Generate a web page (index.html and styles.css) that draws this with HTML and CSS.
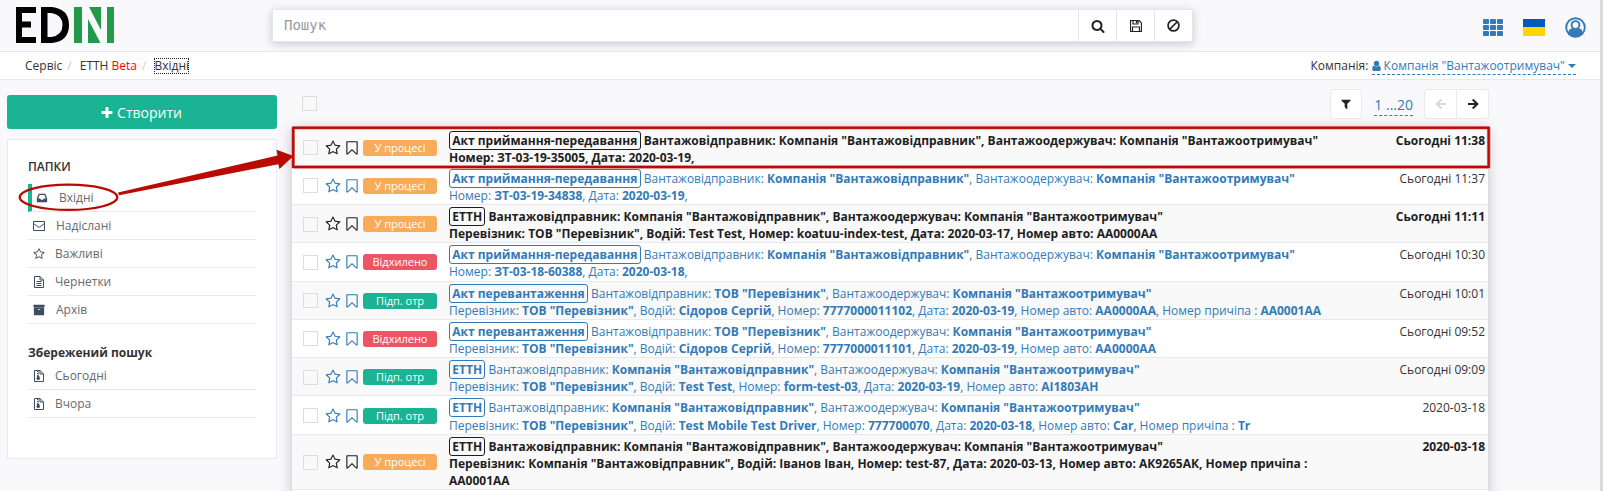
FILE: index.html
```html
<!DOCTYPE html>
<html lang="uk">
<head>
<meta charset="utf-8">
<title>EDIN</title>
<link rel="stylesheet" href="styles.css">
</head>
<body>
<svg class="defs" width="0" height="0">
  <symbol id="search" viewBox="0 0 1792 1792"><path d="M1216 832q0-185-131.500-316.500t-316.500-131.500-316.500 131.500-131.500 316.500 131.500 316.500 316.500 131.500 316.500-131.500 131.500-316.500zm512 832q0 52-38 90t-90 38q-54 0-90-38l-343-342q-179 124-399 124-143 0-273.500-55.500t-225-150-150-225-55.500-273.500 55.500-273.500 150-225 225-150 273.500-55.500 273.500 55.500 225 150 150 225 55.500 273.500q0 220-124 399l343 343q37 37 37 90z"/></symbol>
  <symbol id="plus" viewBox="0 0 1792 1792"><path d="M1600 736v192q0 40-28 68t-68 28h-416v416q0 40-28 68t-68 28h-192q-40 0-68-28t-28-68v-416h-416q-40 0-68-28t-28-68v-192q0-40 28-68t68-28h416v-416q0-40 28-68t68-28h192q40 0 68 28t28 68v416h416q40 0 68 28t28 68z"/></symbol>
  <symbol id="star" viewBox="0 0 1792 1792"><path d="M1201 1004l306-297-422-62-189-382-189 382-422 62 306 297-73 421 378-199 377 199zm527-357q0 22-26 48l-363 354 86 500q1 7 1 20 0 50-41 50-19 0-40-12l-449-236-449 236q-22 12-40 12-21 0-31.500-14.500t-10.500-35.500q0-6 2-20l86-500-364-354q-25-27-25-48 0-37 56-46l502-73 225-455q19-41 49-41t49 41l225 455 502 73q56 9 56 46z"/></symbol>
  <symbol id="bookmark" viewBox="0 0 1792 1792"><path d="M1408 256h-1024v1242l423-406 89-85 89 85 423 406v-1242zm12-128q23 0 44 9 33 13 52.500 41t19.500 62v1289q0 34-19.500 62t-52.500 41q-19 8-44 8-48 0-83-32l-441-424-441 424q-36 33-83 33-23 0-44-9-33-13-52.500-41t-19.500-62v-1289q0-34 19.500-62t52.500-41q21-9 44-9h1048z"/></symbol>
  <symbol id="filter" viewBox="0 0 1792 1792"><path d="M1595 295q17 41-14 70l-493 493v742q0 42-39 59-13 5-25 5-27 0-45-19l-256-256q-19-19-19-45v-486l-493-493q-31-29-14-70 17-39 59-39h1280q42 0 59 39z"/></symbol>
  <symbol id="inbox" viewBox="0 0 1792 1792"><path d="M1151 960h316q-1-3-2.500-8t-2.500-8l-212-496h-708l-212 496q-1 2-2.500 8t-2.500 8h316l95 192h320zm513 30v482q0 26-19 45t-45 19h-1408q-26 0-45-19t-19-45v-482q0-62 25-123l238-552q10-25 36.500-42t52.500-17h832q26 0 52.500 17t36.500 42l238 552q25 61 25 123z"/></symbol>
  <symbol id="archive" viewBox="0 0 1792 1792"><path d="M1088 832q0-26-19-45t-45-19h-256q-26 0-45 19t-19 45 19 45 45 19h256q26 0 45-19t19-45zm576-192v960q0 26-19 45t-45 19h-1408q-26 0-45-19t-19-45v-960q0-26 19-45t45-19h1408q26 0 45 19t19 45zm64-448v256q0 26-19 45t-45 19h-1536q-26 0-45-19t-19-45v-256q0-26 19-45t45-19h1536q26 0 45 19t19 45z"/></symbol>
  <symbol id="mail" viewBox="0 0 12 12"><path d="M.5 1.500h11v9h-11zM.5 3.500l4.700 3.400q.8.500 1.600 0l4.700-3.400" fill="none" stroke="currentColor"/></symbol>
  <symbol id="file" viewBox="0 0 12 12"><path d="M1.500.5h5.500l3.500 3.500v7.500h-9zM7 .5v3.500h3.500M3.500 5.500h5M3.500 7.500h5M3.500 9.500h5" fill="none" stroke="currentColor"/></symbol>
  <symbol id="zip" viewBox="0 0 12 12"><path d="M1.500.5h5.500l3.500 3.500v7.500h-9zM7 .5v3.500h3.500" fill="none" stroke="currentColor"/><path d="M4.500 1v5M5.500 1.500v5" fill="none" stroke="currentColor" stroke-dasharray="1 1"/><path d="M4.200 6h2l.7 2.500q0 1.500-1.700 1.500t-1.700-1.500z"/></symbol>
  <symbol id="save" viewBox="0 0 12 12"><path d="M.5.5h8.500l2.500 2.500v8.500h-11zM3 .5v3.500h5v-3.500M2.500 11.500v-4.500h7v4.500" fill="none" stroke="currentColor" stroke-width="1.200"/><path d="M5.800 1h1.400v2.200h-1.400z"/></symbol>
  <symbol id="ban" viewBox="0 0 12 12"><path d="M2.300 9.700l7.400-7.400M11 6a5 5 0 1 1-10 0a5 5 0 1 1 10 0z" fill="none" stroke="currentColor" stroke-width="1.600"/></symbol>
  <symbol id="arrow" viewBox="0 0 12 12"><path d="M1 6h9M5.700 1.400l4.600 4.600-4.600 4.600" fill="none" stroke="currentColor" stroke-width="2.100"/></symbol>
  <symbol id="person" viewBox="0 0 10 12"><circle cx="5" cy="3.200" r="2.900"/><path d="M2 5.400q3 2.500 6 0q1.800.8 1.800 4q0 2.100-1.700 2.100h-6.200q-1.700 0-1.700-2.100q0-3.200 1.800-4z"/></symbol>
</svg>

<header class="topbar">
  <svg class="logo" width="98" height="36" viewBox="0 0 98 36">
    <path d="M0 0h20v6h-14v8.500h9v6h-9v9.500h14v6h-20z"/>
    <path fill-rule="evenodd" d="M25 0h11q17 2 17 18t-17 18h-11zM31.500 6v24h4q11-2 11-12t-11-12z"/>
    <path class="logo-green" d="M58 0h8v36h-8zM91 0h7v36h-7zM73 0h12v23zM72 12l12.500 24h-12.500z"/>
  </svg>
  <div class="search">
    <div class="search-input">Пошук</div>
    <div class="search-btn"><svg width="14" height="14"><use href="#search"/></svg></div>
    <div class="search-btn"><svg width="12" height="12"><use href="#save"/></svg></div>
    <div class="search-btn"><svg width="13" height="13"><use href="#ban"/></svg></div>
  </div>
  <div class="top-icons">
    <svg width="20" height="17" viewBox="0 0 20 17"><g id="cells"><rect width="6" height="5" rx="1"/><rect x="7" width="6" height="5" rx="1"/><rect x="14" width="6" height="5" rx="1"/></g><use href="#cells" y="6"/><use href="#cells" y="12"/></svg>
    <div class="flag"></div>
    <svg width="21" height="21" viewBox="0 0 21 21"><circle cx="10.500" cy="10.500" r="9.300" fill="none" stroke="currentColor" stroke-width="1.900"/><circle cx="10.500" cy="8" r="3.900" fill="none" stroke="currentColor" stroke-width="1.900"/><path d="M3 16q1-4.500 4.300-4.800q3.200 2.400 6.400 0q3.300.3 4.300 4.800q-3 4.200-7.500 4.200t-7.500-4.200z"/></svg>
  </div>
</header>

<nav class="crumbs">
  <span>Сервіс</span><i class="sep s1">/</i><span>ЕТТН <b class="beta">Beta</b></span><i class="sep s2">/</i><span class="focus">Вхідні</span>
  <div class="company">Компанія: <span class="company-link"><svg width="9" height="12"><use href="#person"/></svg> Компанія "Вантажоотримувач" <i class="caret"></i></span></div>
</nav>

<main class="main">
  <aside class="side">
    <div class="create"><svg width="14" height="14"><use href="#plus"/></svg>Створити</div>
    <div class="panel">
      <h5 class="folders">ПАПКИ</h5>
      <div class="item active"><svg width="12" height="12"><use href="#inbox"/></svg>Вхідні</div>
      <div class="item i2"><svg width="12" height="12"><use href="#mail"/></svg>Надіслані</div>
      <div class="item"><svg width="12" height="12"><use href="#star"/></svg>Важливі</div>
      <div class="item"><svg width="12" height="12"><use href="#file"/></svg>Чернетки</div>
      <div class="item i2"><svg width="12" height="12"><use href="#archive"/></svg>Архів</div>
      <h5 class="saved">Збережений пошук</h5>
      <div class="item"><svg width="12" height="12"><use href="#zip"/></svg>Сьогодні</div>
      <div class="item"><svg width="12" height="12"><use href="#zip"/></svg>Вчора</div>
    </div>
  </aside>

  <section class="content">
    <div class="tools">
      <span class="check"></span>
      <div class="btn filter"><svg width="12" height="12"><use href="#filter"/></svg></div>
      <span class="pages">1 ...20</span>
      <div class="pager">
        <div class="btn off"><svg class="flip" width="12" height="12"><use href="#arrow"/></svg></div>
        <div class="btn"><svg width="12" height="12"><use href="#arrow"/></svg></div>
      </div>
    </div>
    <div class="list">
      <div class="row unread">
        <div class="marks"><span class="check"></span><svg width="16" height="16"><use href="#star"/></svg><svg width="16" height="16"><use href="#bookmark"/></svg><span class="label wait">У процесі</span></div>
        <div class="text"><b class="tag">Акт приймання-передавання</b> Вантажовідправник: <b>Компанія "Вантажовідправник"</b>, Вантажоодержувач: <b>Компанія "Вантажоотримувач"</b><br>Номер: <b>ЗТ-03-19-35005</b>, Дата: <b>2020-03-19</b>,</div>
        <div class="date">Сьогодні 11:38</div>
      </div>
      <div class="row">
        <div class="marks"><span class="check"></span><svg width="16" height="16"><use href="#star"/></svg><svg width="16" height="16"><use href="#bookmark"/></svg><span class="label wait">У процесі</span></div>
        <div class="text"><b class="tag">Акт приймання-передавання</b> Вантажовідправник: <b>Компанія "Вантажовідправник"</b>, Вантажоодержувач: <b>Компанія "Вантажоотримувач"</b><br>Номер: <b>ЗТ-03-19-34838</b>, Дата: <b>2020-03-19</b>,</div>
        <div class="date">Сьогодні 11:37</div>
      </div>
      <div class="row unread">
        <div class="marks"><span class="check"></span><svg width="16" height="16"><use href="#star"/></svg><svg width="16" height="16"><use href="#bookmark"/></svg><span class="label wait">У процесі</span></div>
        <div class="text"><b class="tag">ЕТТН</b> Вантажовідправник: <b>Компанія "Вантажовідправник"</b>, Вантажоодержувач: <b>Компанія "Вантажоотримувач"</b><br>Перевізник: <b>ТОВ "Перевізник"</b>, Водій: <b>Test Test</b>, Номер: <b>koatuu-index-test</b>, Дата: <b>2020-03-17</b>, Номер авто: <b>АА0000АА</b></div>
        <div class="date">Сьогодні 11:11</div>
      </div>
      <div class="row">
        <div class="marks"><span class="check"></span><svg width="16" height="16"><use href="#star"/></svg><svg width="16" height="16"><use href="#bookmark"/></svg><span class="label no">Відхилено</span></div>
        <div class="text"><b class="tag">Акт приймання-передавання</b> Вантажовідправник: <b>Компанія "Вантажовідправник"</b>, Вантажоодержувач: <b>Компанія "Вантажоотримувач"</b><br>Номер: <b>ЗТ-03-18-60388</b>, Дата: <b>2020-03-18</b>,</div>
        <div class="date">Сьогодні 10:30</div>
      </div>
      <div class="row">
        <div class="marks"><span class="check"></span><svg width="16" height="16"><use href="#star"/></svg><svg width="16" height="16"><use href="#bookmark"/></svg><span class="label ok">Підп. отр</span></div>
        <div class="text"><b class="tag">Акт перевантаження</b> Вантажовідправник: <b>ТОВ "Перевізник"</b>, Вантажоодержувач: <b>Компанія "Вантажоотримувач"</b><br>Перевізник: <b>ТОВ "Перевізник"</b>, Водій: <b>Сідоров Сергій</b>, Номер: <b>7777000011102</b>, Дата: <b>2020-03-19</b>, Номер авто: <b>АА0000АА</b>, Номер причіпа : <b>АА0001АА</b></div>
        <div class="date">Сьогодні 10:01</div>
      </div>
      <div class="row">
        <div class="marks"><span class="check"></span><svg width="16" height="16"><use href="#star"/></svg><svg width="16" height="16"><use href="#bookmark"/></svg><span class="label no">Відхилено</span></div>
        <div class="text"><b class="tag">Акт перевантаження</b> Вантажовідправник: <b>ТОВ "Перевізник"</b>, Вантажоодержувач: <b>Компанія "Вантажоотримувач"</b><br>Перевізник: <b>ТОВ "Перевізник"</b>, Водій: <b>Сідоров Сергій</b>, Номер: <b>7777000011101</b>, Дата: <b>2020-03-19</b>, Номер авто: <b>АА0000АА</b></div>
        <div class="date">Сьогодні 09:52</div>
      </div>
      <div class="row">
        <div class="marks"><span class="check"></span><svg width="16" height="16"><use href="#star"/></svg><svg width="16" height="16"><use href="#bookmark"/></svg><span class="label ok">Підп. отр</span></div>
        <div class="text"><b class="tag">ЕТТН</b> Вантажовідправник: <b>Компанія "Вантажовідправник"</b>, Вантажоодержувач: <b>Компанія "Вантажоотримувач"</b><br>Перевізник: <b>ТОВ "Перевізник"</b>, Водій: <b>Test Test</b>, Номер: <b>form-test-03</b>, Дата: <b>2020-03-19</b>, Номер авто: <b>АІ1803АН</b></div>
        <div class="date">Сьогодні 09:09</div>
      </div>
      <div class="row">
        <div class="marks"><span class="check"></span><svg width="16" height="16"><use href="#star"/></svg><svg width="16" height="16"><use href="#bookmark"/></svg><span class="label ok">Підп. отр</span></div>
        <div class="text"><b class="tag">ЕТТН</b> Вантажовідправник: <b>Компанія "Вантажовідправник"</b>, Вантажоодержувач: <b>Компанія "Вантажоотримувач"</b><br>Перевізник: <b>ТОВ "Перевізник"</b>, Водій: <b>Test Mobile Test Driver</b>, Номер: <b>777700070</b>, Дата: <b>2020-03-18</b>, Номер авто: <b>Car</b>, Номер причіпа : <b>Tr</b></div>
        <div class="date">2020-03-18</div>
      </div>
      <div class="row unread">
        <div class="marks"><span class="check"></span><svg width="16" height="16"><use href="#star"/></svg><svg width="16" height="16"><use href="#bookmark"/></svg><span class="label wait">У процесі</span></div>
        <div class="text"><b class="tag">ЕТТН</b> Вантажовідправник: <b>Компанія "Вантажовідправник"</b>, Вантажоодержувач: <b>Компанія "Вантажоотримувач"</b><br>Перевізник: <b>Компанія "Вантажовідправник"</b>, Водій: <b>Іванов Іван</b>, Номер: <b>test-87</b>, Дата: <b>2020-03-13</b>, Номер авто: <b>АК9265АК</b>, Номер причіпа : <b>АА0001АА</b></div>
        <div class="date">2020-03-18</div>
      </div>
      <div class="row next"></div>
    </div>
  </section>
</main>
<div class="scroll-edge"></div>

<svg class="notes" width="1603" height="491" viewBox="0 0 1603 491">
  <rect x="293.200" y="127.800" width="1195.500" height="39.200" fill="none" stroke="#d98880" stroke-width="3.600" rx="1"/>
  <rect x="293.200" y="127.800" width="1195.500" height="39.200" fill="none" stroke="#b90a04" stroke-width="2.200"/>
  <ellipse cx="68.500" cy="197.300" rx="48.800" ry="12.600" fill="none" stroke="#b90a04" stroke-width="2.200"/>
  <path d="M118 192.500L277.500 155.500L276.500 149.800L293.500 156L279.500 169L278.300 164.200L119 195.200z" fill="#b90a04"/>
</svg>
</body>
</html>
```
FILE: styles.css
```css
* { box-sizing: border-box; }
body {
  margin: 0;
  height: 491px;
  overflow: hidden;
  position: relative;
  background: #f9f9fb;
  color: #333;
  font: 12px/17.14px "Open Sans", "Noto Sans", sans-serif;
}
svg { fill: currentColor; flex: none; }
b { font-weight: 700; }
.defs { position: absolute; }

.topbar {
  height: 52px;
  display: flex;
  align-items: flex-start;
  padding: 7px 17px 0 16px;
  border-bottom: 1px solid #e7e8ea;
}
.logo { color: #000; }
.logo-green { fill: #229a49; }
.search {
  display: flex;
  width: 921px;
  height: 33px;
  margin: 2px 0 0 158px;
  background: #fff;
  border: 1px solid #e5e6e7;
  box-shadow: 0 2px 8px rgba(50, 50, 90, .25);
  color: #222;
}
.search-input {
  flex: 1;
  padding-left: 11px;
  color: #999;
  font: 14px/31px "DejaVu Sans Mono", monospace;
}
.search-btn {
  width: 38px;
  border-left: 1px solid #e5e6e7;
  display: flex;
  align-items: center;
  justify-content: center;
}
.top-icons {
  display: flex;
  align-items: center;
  gap: 20px;
  margin: 10px 0 0 auto;
  color: #337ab7;
}
.flag {
  width: 22px;
  height: 17px;
  background: linear-gradient(#005bbb 50%, #ffd500 50%);
}

.crumbs {
  height: 28px;
  display: flex;
  align-items: center;
  padding: 0 27px 0 25px;
  background: #fff;
  border-bottom: 1px solid #e7e8ea;
}
.sep { color: #ccc; font-style: normal; }
.s1 { margin: 0 8px 0 5px; }
.s2 { margin: 0 8px 0 5px; }
.beta { color: #f00; font-weight: 400; }
.focus { outline: 1px dotted #222; outline-offset: -1px; line-height: 16px; }
.company { margin: 1px 0 0 auto; }
.company-link {
  display: inline-block;
  color: #337ab7;
  border-bottom: 1px dashed #337ab7;
}
.company-link svg { vertical-align: -2px; }
.caret {
  display: inline-block;
  border: 4px solid transparent;
  border-top-color: #337ab7;
  border-bottom: 0;
  vertical-align: 2px;
}

.main { display: flex; padding-left: 7px; }
.side { width: 270px; padding-top: 15px; }
.create {
  height: 34px;
  display: flex;
  align-items: center;
  justify-content: center;
  gap: 3px;
  padding: 1px 2px 0 0;
  background: #1ab394;
  border-radius: 3px;
  color: #fff;
  font-size: 14px;
}
.panel {
  height: 320px;
  margin-top: 10px;
  padding: 19px 20px 0;
  background: #fff;
  border: 1px solid #e7eaf5;
}
h5 { margin: 0; font-size: 12px; line-height: 16px; }
.folders { font-weight: 600; margin-bottom: 9px; }
.saved { font-weight: 700; margin: 21px 0 1px; }
.item {
  height: 28px;
  display: flex;
  align-items: center;
  gap: 10px;
  padding-left: 5px;
  border-bottom: 1px solid #e7eaec;
  color: #676a6c;
}
.item svg { color: #3d4d63; }
.item.active { border-left: 4px solid #1ab394; padding-left: 4px; gap: 11px; }
.i2 { gap: 11px; }

.content { width: 1196px; margin-left: 15px; }
.tools {
  height: 48.5px;
  display: flex;
  align-items: flex-start;
  padding: 8px 0 0 10px;
}
.check {
  width: 15px;
  height: 15px;
  flex: none;
  border: 1px solid #deddd9;
}
.tools .check { margin-top: 8px; }
.btn {
  width: 32px;
  height: 30px;
  display: flex;
  align-items: center;
  justify-content: center;
  background: #fff;
  border: 1px solid #e7eaec;
  border-radius: 3px;
  color: #222;
}
.filter { margin: 1px 0 0 auto; }
.pages {
  margin: 7px 11px 0 12px;
  color: #337ab7;
  border-bottom: 1px dashed #337ab7;
  font-size: 14px;
  line-height: 20px;
}
.pager { display: flex; margin: 1px -1px 0 0; }
.pager .btn + .btn { margin-left: 0; border-left: 0; border-radius: 0 3px 3px 0; }
.off { width: 33px; color: #d9d9d9; border-radius: 3px 0 0 3px; }
.flip { transform: scaleX(-1); }

.list { box-shadow: 0 0 12px rgba(60, 60, 90, .3); background: #fff; }
.row {
  display: flex;
  padding: 3px 3px 0 11px;
  border-bottom: 1px solid #e7eaec;
  color: #337ab7;
}
.row:nth-child(odd) { background: #f9f9f9; }
.marks { display: flex; align-items: center; width: 146px; padding-bottom: 2.200px; }
.marks .check { margin-right: 7px; }
.marks svg + svg { margin: 0 3px 0 3px; }
.label {
  width: 74px;
  height: 16px;
  border-radius: 3px;
  color: #fff;
  font-size: 11px;
  font-weight: 400;
  line-height: 16px;
  text-align: center;
}
.wait { background: #f8ac59; }
.no { background: #ed5565; }
.ok { background: #1ab394; }
.text { width: 900px; }
.tag { border: 1px solid; border-radius: 3px; padding: 0 2.300px; }
.date { margin-left: auto; color: #333; white-space: nowrap; }
.unread, .unread .date { color: #1e1e22; font-weight: 700; }
.next { height: 20px; }

.scroll-edge { position: absolute; top: 0; right: 0; width: 3px; height: 491px; background: #dadada; }
.notes { position: absolute; top: 0; left: 0; }
```
